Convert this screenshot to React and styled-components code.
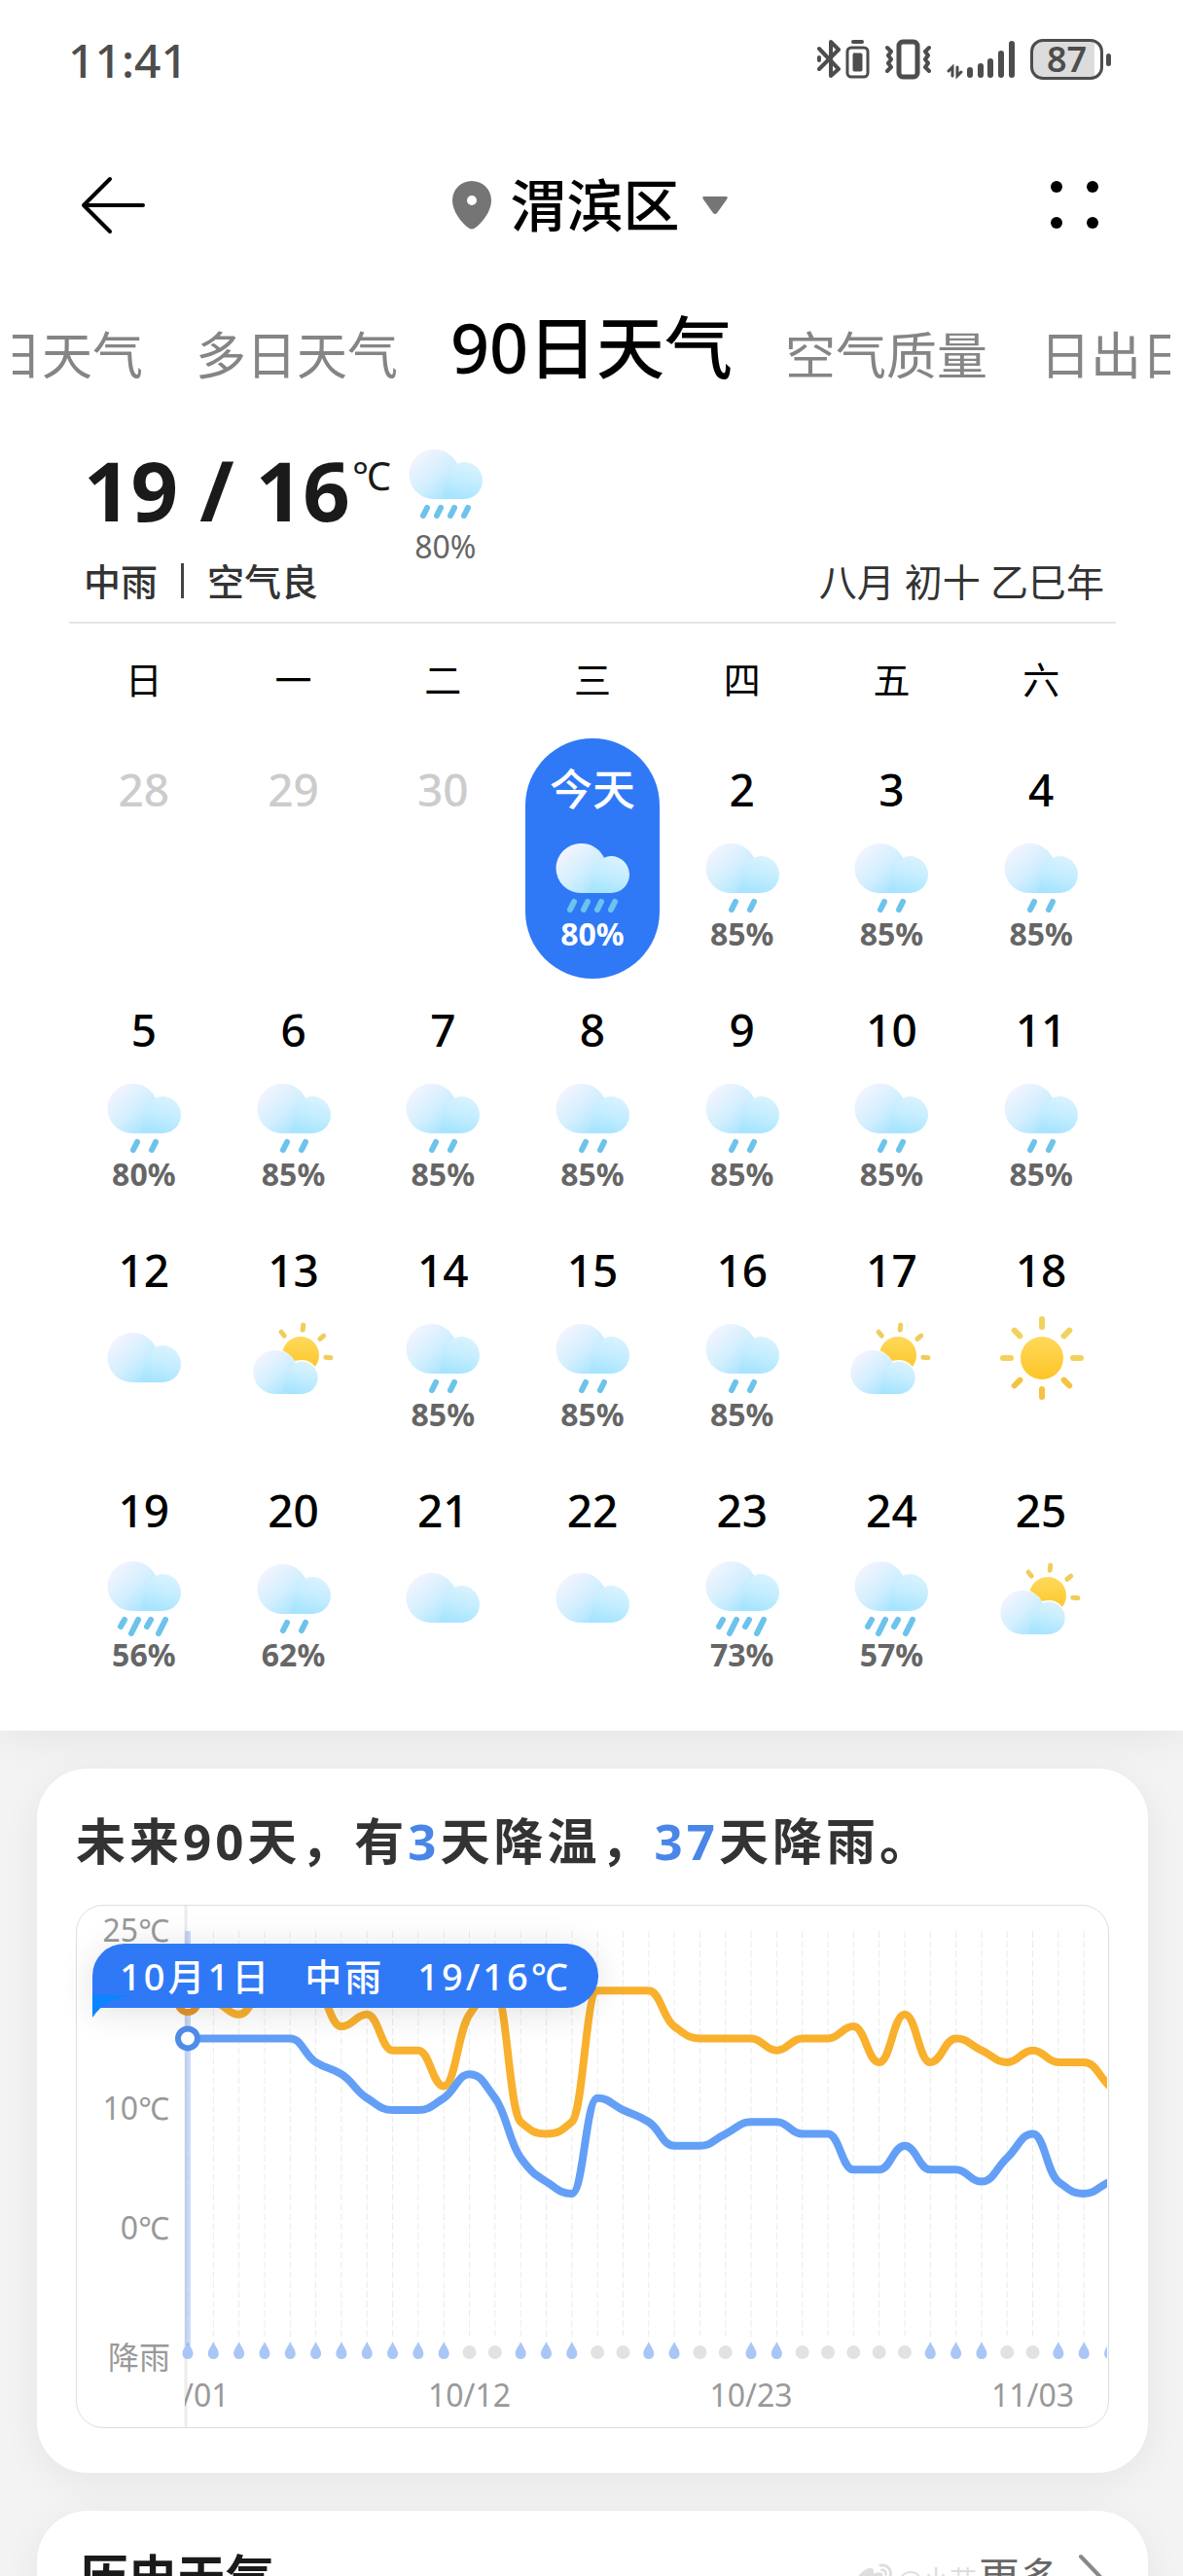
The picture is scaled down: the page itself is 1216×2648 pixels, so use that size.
import React from 'react';
import styled, { createGlobalStyle } from 'styled-components';
import { FaWeibo } from 'react-icons/fa';

const WEEKDAYS = ['日', '一', '二', '三', '四', '五', '六'];

const DAYS = [
    { label: '28', past: true },
    { label: '29', past: true },
    { label: '30', past: true },
    { label: '今天', icon: 'medium', rain: 80, today: true },
    { label: '2', icon: 'light', rain: 85 },
    { label: '3', icon: 'light', rain: 85 },
    { label: '4', icon: 'light', rain: 85 },
    { label: '5', icon: 'light', rain: 80 },
    { label: '6', icon: 'light', rain: 85 },
    { label: '7', icon: 'light', rain: 85 },
    { label: '8', icon: 'light', rain: 85 },
    { label: '9', icon: 'light', rain: 85 },
    { label: '10', icon: 'light', rain: 85 },
    { label: '11', icon: 'light', rain: 85 },
    { label: '12', icon: 'cloudy' },
    { label: '13', icon: 'partly' },
    { label: '14', icon: 'light', rain: 85 },
    { label: '15', icon: 'light', rain: 85 },
    { label: '16', icon: 'light', rain: 85 },
    { label: '17', icon: 'partly' },
    { label: '18', icon: 'sunny' },
    { label: '19', icon: 'heavy', rain: 56 },
    { label: '20', icon: 'light', rain: 62 },
    { label: '21', icon: 'cloudy' },
    { label: '22', icon: 'cloudy' },
    { label: '23', icon: 'heavy', rain: 73 },
    { label: '24', icon: 'heavy', rain: 57 },
    { label: '25', icon: 'partly' },
];

const HIGHS = [19, 19, 18, 20, 20, 20, 17, 18, 15, 15, 12, 18, 20, 9, 8, 9, 20, 20, 20, 17, 16, 16, 16, 15, 16, 16, 17, 14, 18, 14, 16, 15, 14, 15, 14, 14, 12];
const LOWS = [16, 16, 16, 16, 16, 14, 13, 11, 10, 10, 11, 13, 11, 6, 4, 3, 11, 10, 9, 7, 7, 8, 9, 9, 8, 8, 5, 5, 7, 5, 5, 4, 6, 8, 4, 3, 4];
const DRY_DAYS = [11, 12, 16, 17, 20, 21, 24, 25, 26, 27, 28, 32, 33];
const DATE_MARKS = [
    { day: 0, label: '10/01' },
    { day: 11, label: '10/12' },
    { day: 22, label: '10/23' },
    { day: 33, label: '11/03' },
];

const PLOT_LEFT = 111;
const dayX = (day) => 114 + day * 26.32;
const tempY = (temp) => 210 + (10 - temp) * 12.27;

// monotone cubic, so flat stretches stay flat and peaks do not overshoot
const smoothPath = (temps) => {
    const pts = temps.map((t, i) => [dayX(i), tempY(t)]);
    const slopes = pts.slice(1).map((p, i) => (p[1] - pts[i][1]) / (p[0] - pts[i][0]));
    const tangents = pts.map((p, i) => {
        if (i === 0) return slopes[0];
        if (i === pts.length - 1) return slopes[i - 1];
        const a = slopes[i - 1];
        const b = slopes[i];
        return a * b <= 0 ? 0 : (2 * a * b) / (a + b);
    });
    return pts.reduce((d, p, i) => {
        if (i === 0) return `M${p[0]},${p[1]}`;
        const q = pts[i - 1];
        const h = (p[0] - q[0]) * 0.45;
        return `${d}C${q[0] + h},${q[1] + tangents[i - 1] * h} ${p[0] - h},${p[1] - tangents[i] * h} ${p[0]},${p[1]}`;
    }, '');
};

const Cloud = (props) => (
    <g {...props}>
        <path fill="url(#cloud-back)" d="M36 0a25.500 25.500 0 0 0 0 51H67V16H60.500A25.500 25.500 0 0 0 36 0z" />
        <path fill="url(#cloud-front)" d="M67 13a19 19 0 0 1 0 38H44L49 32A19 19 0 0 1 67 13z" />
    </g>
);

const Drops = ({ list }) => (
    <g stroke="#6cc3ec" strokeWidth="6" strokeLinecap="round">
        {list.map(([x1, y1, x2, y2]) => (
            <line key={x1} x1={x1} y1={y1} x2={x2} y2={y2} />
        ))}
    </g>
);

const LIGHT = [[41, 73, 37, 81], [60, 73, 56, 81]];
const MEDIUM = [[29, 73, 25, 81], [43, 73, 39, 81], [57, 73, 53, 81], [71, 73, 67, 81]];
const HEAVY = [[28, 70, 24, 77], [42, 70, 35, 84], [55, 70, 51, 77], [70, 70, 63, 84]];

const WeatherIcon = ({ type }) => (
    <WeatherSvg viewBox="0 0 96 96" aria-hidden="true">
        {type === 'cloudy' && <Cloud transform="translate(0 22)" />}
        {type === 'light' && <><Cloud transform="translate(0 13)" /><Drops list={LIGHT} /></>}
        {type === 'medium' && <><Cloud transform="translate(0 13)" /><Drops list={MEDIUM} /></>}
        {type === 'heavy' && <><Cloud transform="translate(0 10)" /><Drops list={HEAVY} /></>}
        {type === 'sunny' && (
            <>
                <circle cx="49" cy="48" r="22" fill="url(#sun)" />
                <g strokeWidth="6" strokeLinecap="round">
                    {[0, 45, 90, 135, 180, 225, 270, 315].map((a) => (
                        <line key={a} x1="49" y1="8" x2="49" y2="16" stroke={a > 90 && a < 270 ? '#f3c443' : '#f3d25c'} transform={`rotate(${a} 49 48)`} />
                    ))}
                </g>
            </>
        )}
        {type === 'partly' && (
            <>
                <circle cx="55" cy="45" r="19" fill="url(#sun)" />
                <g stroke="#f0cd5a" strokeWidth="5" strokeLinecap="round">
                    {[-40, 5, 50, 95].map((a) => (
                        <line key={a} x1="55" y1="14" x2="55" y2="19" transform={`rotate(${a} 55 45)`} />
                    ))}
                </g>
                <g transform="translate(-3 40) scale(0.88)">
                    <path fill="#fff" stroke="#fff" strokeWidth="3" d="M36 0a25.500 25.500 0 0 0 0 51H67a19 19 0 0 0 0-38L58 14A25.500 25.500 0 0 0 36 0z" />
                    <Cloud />
                </g>
            </>
        )}
    </WeatherSvg>
);

const SharedGradients = () => (
    <HiddenSvg aria-hidden="true">
        <defs>
            <linearGradient id="cloud-back" gradientUnits="userSpaceOnUse" x1="18" y1="6" x2="56" y2="50">
                <stop offset="0" stopColor="#f3f4ff" />
                <stop offset="0.5" stopColor="#d3effe" />
                <stop offset="1" stopColor="#a2e2ff" />
            </linearGradient>
            <linearGradient id="cloud-front" gradientUnits="userSpaceOnUse" x1="72" y1="13" x2="62" y2="51">
                <stop offset="0" stopColor="#daf3fe" />
                <stop offset="0.5" stopColor="#c4edff" />
                <stop offset="1" stopColor="#a6e4ff" />
            </linearGradient>
            <linearGradient id="sun" x1="0" y1="0" x2="0" y2="1">
                <stop offset="0" stopColor="#ffd95c" />
                <stop offset="1" stopColor="#fdc425" />
            </linearGradient>
        </defs>
    </HiddenSvg>
);

const StatusIcons = () => (
    <StatusRight>
        <svg width="54" height="42" fill="none" stroke="#4d4d4d" strokeLinecap="round" strokeLinejoin="round" aria-hidden="true">
            <path strokeWidth="4" d="M2 10L22 31L14 38V3L22 11L2 31M2 19V22" />
            <path strokeWidth="4" d="M37 3H46" />
            <rect x="31" y="9" width="21" height="30" rx="4" strokeWidth="3" />
            <rect x="37" y="15" width="9" height="18" rx="1" fill="#4d4d4d" strokeWidth="1" />
        </svg>
        <svg width="47" height="42" fill="none" stroke="#4d4d4d" strokeLinecap="round" strokeLinejoin="round" aria-hidden="true">
            <rect x="14" y="3" width="19" height="36" rx="4" strokeWidth="5" />
            <path strokeWidth="4" d="M2 9L6 13L3 17L6 21L3 25L6 29L2 33M45 9L41 13L44 17L41 21L44 25L41 29L45 33" />
        </svg>
        <svg width="70" height="42" fill="none" stroke="#4d4d4d" strokeLinecap="round" aria-hidden="true">
            <path strokeWidth="6" d="M24 32V37M35 28V37M45 23V37M56 15V37M67 5V37" />
            <path strokeWidth="3" d="M6 38V29L2 33M11 29V38L15 34" />
        </svg>
        <Battery>
            <BatteryBody>87</BatteryBody>
            <BatteryTip />
        </Battery>
    </StatusRight>
);

const TrendChart = () => (
    <ChartBox>
        <ChartSvg role="img" aria-label="未来气温与降雨趋势">
            <defs>
                <clipPath id="plot-area">
                    <rect x={PLOT_LEFT} y="0" width="948" height="536" />
                </clipPath>
                <clipPath id="rain-area">
                    <rect x="100" y="0" width="959" height="536" />
                </clipPath>
            </defs>
            <g fontSize="32" fill="#999" textAnchor="end">
                <text x="95" y="37">25℃</text>
                <text x="95" y="220">10℃</text>
                <text x="95" y="343">0℃</text>
                <text x="96" y="476">降雨</text>
            </g>
            <line x1="112" y1="0" x2="112" y2="536" stroke="#ececee" strokeWidth="3" />
            <g clipPath="url(#rain-area)">
                {HIGHS.map((t, day) => DRY_DAYS.includes(day) ? (
                    <circle key={day} cx={dayX(day)} cy="459" r="7" fill="#e2e2e2" />
                ) : (
                    <path key={day} fill="#a9c6f7" transform={`translate(${dayX(day)} 448)`} d="M0 0C2 5 5.500 8 5.500 12.500A5.500 5.500 0 0 1 -5.500 12.500C-5.500 8 -2 5 0 0z" />
                ))}
            </g>
            <g clipPath="url(#plot-area)">
                {HIGHS.map((t, day) => (
                    <line key={day} x1={dayX(day)} y1="26" x2={dayX(day)} y2="444" stroke="#ececec" strokeDasharray="7 3" strokeWidth="1" />
                ))}
                <g fontSize="32" fill="#999" textAnchor="middle">
                    {DATE_MARKS.map((m) => <text key={m.day} x={dayX(m.day)} y="515">{m.label}</text>)}
                </g>
                <path d={smoothPath(HIGHS)} fill="none" stroke="#f9b02d" strokeWidth="8" />
                <path d={smoothPath(LOWS)} fill="none" stroke="#639ff6" strokeWidth="8" />
            </g>
            <rect x="111" y="26" width="6" height="426" fill="#7ca7f2" opacity="0.4" />
            <circle cx="114" cy={tempY(19)} r="10" fill="#fff" stroke="#e7952c" strokeWidth="7" />
            <circle cx="114" cy={tempY(16)} r="10" fill="#fff" stroke="#4f8deb" strokeWidth="6" />
        </ChartSvg>
        <Tooltip>
            <span>10月1日</span>
            <span>中雨</span>
            <span>19/16℃</span>
            <TooltipTail viewBox="0 0 46 23" aria-hidden="true">
                <path fill="#0a84ff" d="M0 0H46C24 1 10 8 0 23z" />
            </TooltipTail>
        </Tooltip>
    </ChartBox>
);

const App = () => (
    <Page>
        <GlobalStyle />
        <SharedGradients />
        <TopPanel>
            <StatusBar>
                <Clock>11:41</Clock>
                <StatusIcons />
            </StatusBar>

            <TitleBar>
                <IconButton aria-label="返回">
                    <svg width="68" height="64" fill="none" stroke="#000" strokeWidth="4" strokeLinecap="round" strokeLinejoin="round">
                        <path d="M31 5L4 32L31 59M4 32H65" />
                    </svg>
                </IconButton>
                <PlaceButton>
                    <svg width="42" height="50">
                        <path fill="#757575" fillRule="evenodd" d="M21 0A20 20 0 0 0 1 20C1 31 10 43 18 48.500Q21 50.500 24 48.500C32 43 41 31 41 20A20 20 0 0 0 21 0zM21 15a5 5 0 1 1 0 10a5 5 0 0 1 0-10z" />
                    </svg>
                    <PlaceName>渭滨区</PlaceName>
                    <svg width="28" height="20">
                        <path fill="#757575" d="M3 1H25Q28 1 26 4L16 18Q14 20 12 18L2 4Q0 1 3 1z" />
                    </svg>
                </PlaceButton>
                <IconButton aria-label="更多选项">
                    <svg width="68" height="64" fill="#000">
                        <circle cx="16" cy="13" r="6" />
                        <circle cx="53" cy="13" r="6" />
                        <circle cx="16" cy="50" r="6" />
                        <circle cx="53" cy="50" r="6" />
                    </svg>
                </IconButton>
            </TitleBar>

            <Tabs>
                <Tab>今日天气</Tab>
                <Tab>多日天气</Tab>
                <Tab $active>90日天气</Tab>
                <Tab>空气质量</Tab>
                <Tab>日出日落</Tab>
            </Tabs>

            <Overview>
                <div>
                    <NowRow>
                        <Temperature>19 / 16</Temperature>
                        <Unit>℃</Unit>
                        <NowIcon>
                            <WeatherIcon type="medium" />
                            <NowRain>80%</NowRain>
                        </NowIcon>
                    </NowRow>
                    <Condition>
                        <span>中雨</span>
                        <Divider />
                        <span>空气良</span>
                    </Condition>
                </div>
                <Lunar>八月 初十 乙巳年</Lunar>
            </Overview>

            <Week>
                {WEEKDAYS.map((day) => <span key={day}>{day}</span>)}
            </Week>
            <Calendar>
                {DAYS.map((day) => (
                    <DayCell key={day.label} $today={day.today} $past={day.past}>
                        <DayLabel $today={day.today}>{day.label}</DayLabel>
                        {day.icon && <WeatherIcon type={day.icon} />}
                        {day.rain && <RainChance $today={day.today}>{day.rain}%</RainChance>}
                    </DayCell>
                ))}
            </Calendar>
        </TopPanel>

        <Card>
            <Summary>未来90天，有<em>3</em>天降温，<em>37</em>天降雨。</Summary>
            <TrendChart />
        </Card>

        <Card $compact>
            <CardHead>
                <CardTitle>历史天气</CardTitle>
                <MoreLink href="#history">
                    更多
                    <svg width="28" height="50" fill="none" stroke="#888" strokeWidth="4" strokeLinecap="round" strokeLinejoin="round">
                        <path d="M5 4L25 25L5 46" />
                    </svg>
                </MoreLink>
            </CardHead>
        </Card>
        <Watermark>
            <FaWeibo size={38} />
            @小艾
        </Watermark>
    </Page>
);

export default App;

const GlobalStyle = createGlobalStyle`
    * {
        box-sizing: border-box;
    }
    body {
        margin: 0;
        background: #f3f3f3;
        font-family: 'Noto Sans', 'Noto Sans CJK SC', sans-serif;
        color: #000;
    }
    button {
        margin: 0;
        padding: 0;
        border: 0;
        background: none;
        font: inherit;
        color: inherit;
        cursor: pointer;
    }
    svg {
        display: block;
        flex: none;
    }
`;

const Page = styled.div`
    position: relative;
    height: 100vh;
    overflow: hidden;
    background: #f3f3f3;
`;

const HiddenSvg = styled.svg`
    position: absolute;
    width: 0;
    height: 0;
`;

const TopPanel = styled.section`
    background: #fff;
    box-shadow: 0 8px 40px rgba(0, 0, 0, 0.06);
`;

const StatusBar = styled.div`
    display: flex;
    align-items: center;
    justify-content: space-between;
    height: 122px;
    padding: 0 74px 0 70px;
    color: #4d4d4d;
`;

const Clock = styled.span`
    font-size: 48px;
    font-weight: 500;
`;

const StatusRight = styled.div`
    display: flex;
    align-items: center;
    gap: 16px;
`;

const Battery = styled.div`
    display: flex;
    align-items: center;
    gap: 3px;
`;

const BatteryBody = styled.span`
    display: flex;
    align-items: center;
    justify-content: center;
    width: 75px;
    height: 42px;
    border: 3px solid #4d4d4d;
    border-radius: 13px;
    background: linear-gradient(to right, #dcdcdc 92%, #fff 92%);
    font-size: 36px;
    font-weight: 600;
    line-height: 36px;
`;

const BatteryTip = styled.span`
    width: 5px;
    height: 13px;
    border-radius: 3px;
    background: #4d4d4d;
`;

const TitleBar = styled.header`
    display: flex;
    align-items: center;
    justify-content: space-between;
    height: 178px;
    padding: 0 78px 0 82px;
`;

const IconButton = styled.button`
    display: flex;
`;

const PlaceButton = styled.button`
    display: flex;
    align-items: center;
    margin-right: 7px;
`;

const PlaceName = styled.span`
    margin: 0 22px 0 18px;
    font-size: 58px;
    font-weight: 500;
    line-height: 64px;
`;

const Tabs = styled.nav`
    display: flex;
    align-items: flex-end;
    justify-content: center;
    gap: 54px;
    margin: 0 13px;
    padding-top: 17px;
    overflow-x: clip;
`;

const Tab = styled.button`
    flex: none;
    color: ${(props) => (props.$active ? '#000' : '#858585')};
    font-size: ${(props) => (props.$active ? '70px' : '52px')};
    font-weight: ${(props) => (props.$active ? 500 : 400)};
    line-height: ${(props) => (props.$active ? '80px' : '64px')};
`;

const Overview = styled.div`
    display: flex;
    align-items: flex-end;
    justify-content: space-between;
    margin: 0 69px 0 71px;
    padding: 52px 12px 24px 15px;
    border-bottom: 2px solid #e6e6e6;
    color: #333;
`;

const NowRow = styled.div`
    display: flex;
    align-items: flex-start;
`;

const Temperature = styled.strong`
    margin-top: 4px;
    color: #1a1a1a;
    font-size: 85px;
    font-weight: 700;
    line-height: 100px;
`;

const Unit = styled.span`
    margin: 16px 8px 0 2px;
    color: #1a1a1a;
    font-size: 40px;
    line-height: 48px;
`;

const NowIcon = styled.div`
    width: 96px;
    text-align: center;
`;

const NowRain = styled.span`
    display: block;
    color: #666;
    font-size: 32px;
    line-height: 34px;
`;

const Condition = styled.div`
    display: flex;
    align-items: center;
    font-size: 38px;
    font-weight: 500;
    line-height: 34px;
`;

const Divider = styled.i`
    width: 3px;
    height: 36px;
    margin: 0 24px;
    background: #444;
`;

const Lunar = styled.span`
    font-size: 39px;
    line-height: 34px;
`;

const Week = styled.div`
    display: grid;
    grid-template-columns: repeat(7, 1fr);
    align-items: center;
    height: 118px;
    padding: 0 69px 8px 71px;
    font-size: 38px;
    text-align: center;
`;

const Calendar = styled.div`
    display: grid;
    grid-template-columns: repeat(7, 1fr);
    padding: 0 69px 32px 71px;
`;

const DayCell = styled.button`
    display: flex;
    flex-direction: column;
    align-items: center;
    height: 247px;
    margin: 0 8px;
    padding-top: 20px;
    border-radius: 69px;
    background: ${(props) => (props.$today ? '#2f79f7' : 'none')};
    color: ${(props) => (props.$today ? '#fff' : props.$past ? '#ccc' : '#000')};
`;

const DayLabel = styled.span`
    margin-bottom: 11px;
    font-size: ${(props) => (props.$today ? '44px' : '46px')};
    font-weight: 500;
    line-height: 64px;
`;

const WeatherSvg = styled.svg`
    width: 96px;
    height: 96px;
`;

const RainChance = styled.span`
    color: ${(props) => (props.$today ? '#fff' : '#666')};
    font-size: 32px;
    font-weight: 700;
    line-height: 20px;
`;

const Card = styled.section`
    margin: 39px 36px 0 38px;
    padding: ${(props) => (props.$compact ? '38px' : '44px')} 40px 46px;
    border-radius: 52px;
    background: #fff;
    box-shadow: 0 8px 40px rgba(0, 0, 0, 0.06);
`;

const Summary = styled.h2`
    margin: 0 0 36px;
    color: #333;
    font-size: 51px;
    font-weight: 700;
    letter-spacing: 4px;
    line-height: 60px;
    white-space: nowrap;

    em {
        color: #4a86e8;
        font-style: normal;
    }
`;

const ChartBox = styled.div`
    position: relative;
    border: 1px solid #dedede;
    border-radius: 28px;
`;

const ChartSvg = styled.svg`
    width: 100%;
    height: 536px;
`;

const Tooltip = styled.div`
    position: absolute;
    top: 39px;
    left: 16px;
    display: flex;
    gap: 34px;
    padding: 0 28px;
    border-radius: 33px 33px 33px 0;
    background: #2f79f7;
    box-shadow: 0 4px 36px rgba(0, 0, 0, 0.12);
    color: #fff;
    font-size: 38px;
    font-weight: 500;
    letter-spacing: 3px;
    line-height: 66px;
    white-space: nowrap;
`;

const TooltipTail = styled.svg`
    position: absolute;
    bottom: -10px;
    left: 0;
    width: 46px;
    height: 23px;
`;

const CardHead = styled.div`
    display: flex;
    align-items: center;
    justify-content: space-between;
    padding: 0 6px 0 4px;
`;

const CardTitle = styled.h2`
    margin: 0;
    color: #1a1a1a;
    font-size: 50px;
    font-weight: 700;
    line-height: 60px;
`;

const MoreLink = styled.a`
    display: flex;
    align-items: center;
    gap: 16px;
    color: #666;
    font-size: 42px;
    line-height: 60px;
    text-decoration: none;
`;

const Watermark = styled.span`
    position: absolute;
    right: 212px;
    bottom: -28px;
    display: flex;
    align-items: center;
    gap: 6px;
    color: #dedede;
    font-size: 28px;
    line-height: 48px;
`;
